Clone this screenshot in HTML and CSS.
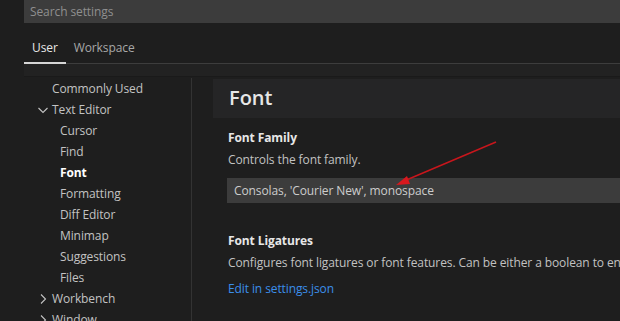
FILE: index.html
```html
<!DOCTYPE html>
<html>
<head>
<meta charset="utf-8">
<link rel="stylesheet" href="styles.css">
</head>
<body>
<div class="editor">
  <div class="search">Search settings</div>
  <div class="tabs">
    <div class="tab active">User</div>
    <div class="tab">Workspace</div>
  </div>
  <div class="band"></div>
  <div class="main">
    <nav class="toc">
      <div class="row lvl0">Commonly Used</div>
      <div class="row lvl0 parent"><svg class="chev" viewBox="0 0 16 16"><path d="M3.5 6 L8 10.5 L12.5 6"/></svg>Text Editor</div>
      <div class="row lvl1">Cursor</div>
      <div class="row lvl1">Find</div>
      <div class="row lvl1 selected">Font</div>
      <div class="row lvl1">Formatting</div>
      <div class="row lvl1">Diff Editor</div>
      <div class="row lvl1">Minimap</div>
      <div class="row lvl1">Suggestions</div>
      <div class="row lvl1">Files</div>
      <div class="row lvl0 parent"><svg class="chev" viewBox="0 0 16 16"><path d="M6 3.5 L10.5 8 L6 12.5"/></svg>Workbench</div>
      <div class="row lvl0 parent"><svg class="chev" viewBox="0 0 16 16"><path d="M6 3.5 L10.5 8 L6 12.5"/></svg>Window</div>
    </nav>
    <section class="content">
      <div class="group-title">Font</div>
      <div class="setting">
        <div class="s-title">Font Family</div>
        <div class="s-desc">Controls the font family.</div>
        <div class="s-input">Consolas, 'Courier New', monospace</div>
      </div>
      <div class="setting second">
        <div class="s-title">Font Ligatures</div>
        <div class="s-desc">Configures font ligatures or font features. Can be either a boolean to enable/disable ligatures or a string for the value of the CSS 'font-feature-settings' property.</div>
        <a class="s-link">Edit in settings.json</a>
      </div>
    </section>
  </div>
  <svg class="annot" viewBox="0 0 620 321" width="620" height="321">
    <line x1="496" y1="142" x2="404" y2="181" stroke="#c8161c" stroke-width="1.5"/>
    <polygon points="396,185 407,176 410,184" fill="#d8181e"/>
  </svg>
</div>
</body>
</html>
```
FILE: styles.css
```css
html, body {
  margin: 0;
  padding: 0;
  background: #1e1e1e;
  overflow: hidden;
}
.editor {
  position: relative;
  width: 620px;
  height: 321px;
  overflow: hidden;
  padding-left: 24px;
  box-sizing: border-box;
  font-family: "Open Sans", "Noto Sans", sans-serif;
  font-size: 12px;
  letter-spacing: -0.1px;
  color: #cccccc;
}
.search {
  width: 640px;
  height: 23px;
  line-height: 23px;
  background: #3c3c3c;
  color: #8f8f8f;
  padding-left: 6px;
}
.tabs {
  display: flex;
  width: 640px;
  margin-top: 13px;
  border-bottom: 1px solid #3d3d3d;
}
.tab {
  padding: 0 8px;
  height: 26px;
  line-height: 24px;
  color: #a8a8a8;
  border-bottom: 2px solid transparent;
  margin-bottom: -1px;
}
.tab.active {
  color: #e7e7e7;
  border-bottom-color: #d6d6d6;
}
.band {
  width: 640px;
  height: 12px;
  background: #222222;
  border-bottom: 1px solid #1a1a1a;
}
.main {
  display: flex;
  width: 700px;
}
.toc {
  width: 167px;
  flex: none;
  border-right: 1px solid #333333;
  margin-top: 1px;
  height: 260px;
}
.row {
  height: 21px;
  line-height: 21px;
  display: flex;
  align-items: center;
  color: #c3c3c3;
  white-space: nowrap;
}
.lvl0 { padding-left: 28px; }
.lvl0.parent { padding-left: 11px; }
.lvl0.parent .chev { margin-right: 1px; }
.lvl1 { padding-left: 36px; }
.row.selected { color: #ffffff; font-weight: 700; }
.chev {
  width: 16px;
  height: 16px;
  flex: none;
}
.chev path {
  fill: none;
  stroke: #c3c3c3;
  stroke-width: 1.1;
}
.content {
  flex: 1;
  padding-left: 21px;
  padding-top: 2px;
  min-width: 0;
}
.group-title {
  height: 39px;
  line-height: 37px;
  background: #252526;
  color: #e7e7e7;
  font-size: 20px;
  font-weight: 600;
  letter-spacing: 0;
  padding-left: 16px;
}
.setting {
  padding-left: 14px;
  margin-top: 9px;
}
.setting.second {
  margin-top: 27px;
}
.s-title {
  line-height: 22px;
  font-weight: 700;
  color: #e7e7e7;
  padding-left: 1px;
}
.s-desc {
  line-height: 22px;
  color: #c2c2c2;
  white-space: nowrap;
  padding-left: 1px;
}
.s-input {
  margin-top: 7px;
  height: 25px;
  line-height: 25px;
  background: #3c3c3c;
  color: #cccccc;
  padding-left: 7px;
  white-space: nowrap;
}
.s-link {
  display: block;
  margin-top: 4px;
  line-height: 22px;
  color: #3b8eea;
  padding-left: 1px;
}
.annot {
  position: absolute;
  left: 0;
  top: 0;
  pointer-events: none;
}
```
